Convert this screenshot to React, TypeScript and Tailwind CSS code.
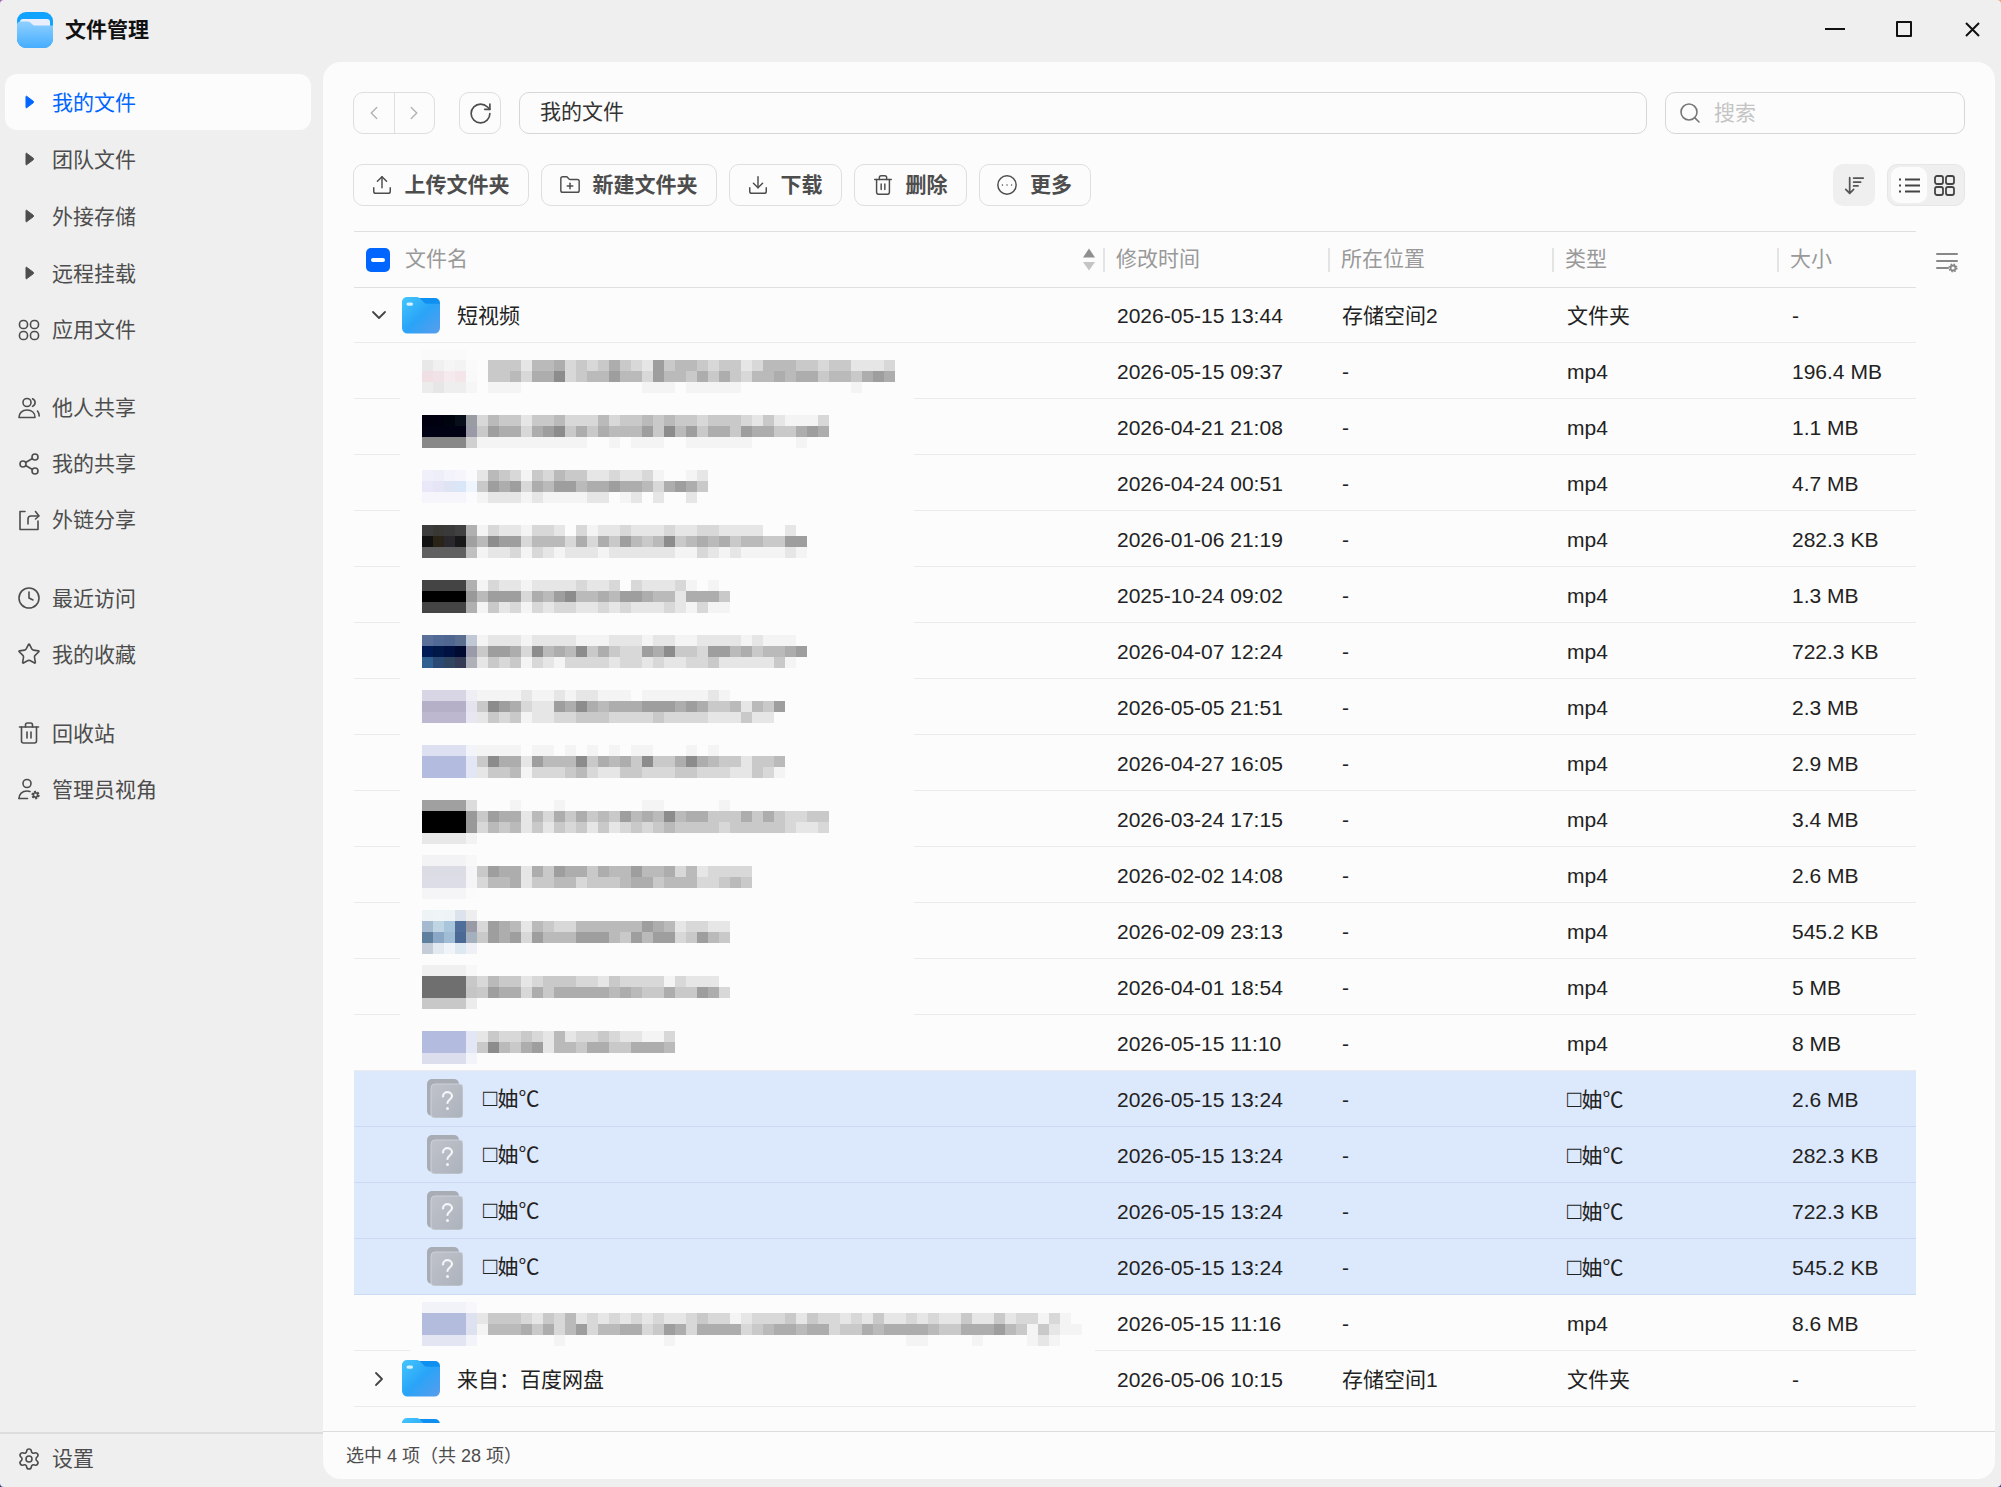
import { ChevronDown, ChevronLeft, ChevronRight, CircleEllipsis, Clock, Download, FolderPlus, RotateCw, Search, Settings, Share2, Star, Trash2, Upload } from "lucide-react";
import type { ReactNode } from "react";

const GRAY: Record<string, string> = {
  "8": "#8c8c8c", "9": "#9e9e9e", a: "#adadad", b: "#bababa", c: "#c9c9c9", d: "#d8d8d8", e: "#e6e6e6", f: "#f4f4f4",
};

// one mosaic line: thumb tiles (5 columns) + gray tiles, 11px grid
type Line = [string[], string];
const t = (c: string, fade: string) => [c, c, c, c, fade];
const E: Line = [[], ""];

const mosaic: Line[] = [
  [t("#fafafa", "#fcfcfc"), ""],
  [["#e8e8e8", "#f0f0f0", "#f5f5f5", "#f3f3f3", "#fafafa"], ".ccceb badcdcacde9cbbcdccedbbbccdcceeed".replace(" ", "")],
  [["#f0e0e4", "#f0e2e6", "#f5eaed", "#f3e5e8", "#f9f9f9"], ".ccbdaa8dcbb9bbd9bbcacacdbbabaacbbca9a"],
  [["#ececec", "#e6e6e6", "#eeeeee", "#eeeeee", "#f6f6f6"], ".fff...........fff.fffff..........f."],
  E, E,
  [["#000010", "#000010", "#00040f", "#060f1a", "#9a9ca4"], "dbcceccbdddbdccbcbccdcccdecefffd"],
  [t("#010213", "#999aa5"), "c9aada98cacabbb9c8b9caac9aacca9a"],
  [t("#888888", "#d0d0d0"), "ffffffffff..f.fff..ffffff....f."],
  E, E,
  [["#f0f0fb", "#eeeef9", "#f3f3fb", "#f5f5fb", "#fbfbfd"], "ebcdfcdbcceedeedf..fe"],
  [["#e8e8f8", "#e5e5f5", "#dfe4f5", "#d8e6f8", "#eef5fc"], "c9a9dab99baa9aabda9ac"],
  [t("#f5f5fb", "#fbfbfd"), "feeefeffffee.fe.e..e."],
  E, E,
  [["#3c3c3c", "#3a3835", "#3a3a3a", "#404040", "#b0b0b0"], "fdeefdde.dfeedeeedeeddeeee..e."],
  [["#111111", "#2a2318", "#2a282c", "#181818", "#a0a0a0"], "b899dbbbdadac9bcb8cbabacbbcc99"],
  [t("#606060", "#c0c0c0"), "feedfdefeeefeeeeeeffdefeffffef"],
  E, E,
  [t("#444444", "#b0b0b0"), "fdeefeeeedeed.deeedf.f."],
  [t("#000000", "#999999"), "b999dab98bbab99abbeaaac"],
  [t("#444444", "#b0b0b0"), "fcedfdeddeededeeedefdff"],
  E, E,
  [["#5a7099", "#506a95", "#4f6690", "#5a6e90", "#c0c8d5"], "feeefeeeefffeeefeeffeeeefefff"],
  [["#001a55", "#001848", "#001040", "#000a30", "#9a9aaa"], "c99ad8bab8cacdd9a8ccd99bacbba9"],
  [["#306090", "#2a4a75", "#2f4560", "#353a55", "#b0b0b8"], "ecdcfdefddddeddedeeddceeeeecf"],
  E, E,
  [t("#d8d5e5", "#f0eef5"), "ffffeffefeefff.ffffffef..."],
  [t("#b5b0c8", "#e5e3ee"), "c89adee9a8abaaa999a9accbebc9"],
  [t("#bdb8d0", "#e8e6f0"), "ecdcfeeddcccddddcddddeeecee."],
  E, E,
  [t("#dde0f0", "#f3f4fa"), "ffff.ff.f.f.f.ff...f.f......"],
  [t("#b3bcdf", "#e2e6f5"), "c8aae9bbb8cabac8cca8abcceccb"],
  [t("#b3bcdf", "#e2e6f5"), "eccbfdddcbdeeccdddccdddeecdf"],
  E, E,
  [t("#a0a0a0", "#dcdcdc"), "...f...f.......ff.....f"],
  [t("#000000", "#999999"), "c9aaebdacacbc9bab8baacccacacddcc"],
  [t("#000000", "#999999"), "dbcbececdcecedcdcbccccdcccccdeed"],
  [t("#e8e8e8", "#f3f3f3"), ""],
  E,
  [t("#f3f3f5", "#f8f8f8"), ""],
  [t("#dcdce5", "#f5f5f8"), "c9aaeac9aacabb9bbadbedddd"],
  [t("#dddde8", "#f5f5f8"), "dbbaeccbbdcccbaacbbbddcbc"],
  [t("#f5f5f8", "#fbfbfb"), ""],
  E,
  [["#eef4f6", "#eff5f7", "#eef4f5", "#dde3ec", "#eeeeee"], ""],
  [["#a5bace", "#c0d5e4", "#a8c5dc", "#4f6f9a", "#999aa5"], "d9abebcddbbbbbb9abeddee"],
  [["#5f7f9f", "#8aa8c5", "#a0bdd5", "#4a6a95", "#a5b0bf"], "c9a9d9bbb999bc9b99dc9bc"],
  [["#c5ced8", "#e2e9f0", "#f0f3f7", "#dde8f0", "#eff0f5"], ""],
  E,
  [t("#f0f0f0", "#f8f8f8"), ""],
  [t("#6f6f6f", "#c8c8c8"), "dbccedcccddecddddfdeee"],
  [t("#6f6f6f", "#c5c5c5"), "c9aadacaaaaababccacc9ad"],
  [t("#c8c8c8", "#ececec"), ""],
  E, E,
  [t("#b3bcdf", "#e2e6f5"), "ecddcdebeddcdeeffd"],
  [t("#b3bcdf", "#e2e6f5"), "c8bca9ebbcaaccaaab"],
  [t("#dcdeee", "#f3f3fa"), ""],
];

const mosaicLast: Line[] = [
  [t("#f1f3f9", "#f8f8fc"), ""],
  [t("#b3bcdc", "#dde1f0"), "ecccdecdbededededeedcddfe" + "dddcecddedeceededeeceeceddfdf"],
  [t("#b3bcdc", "#dde1f0"), "fbbbacadb9dbbaadc9adaaaa" + "dcbaabaadccabaaaabccaaa9bcfceff"],
  [t("#e3e6f2", "#f3f4f9"), ".......f.........f.....................ff....f....fef"],
];

const MosaicLines = ({ lines }: { lines: Line[] }) => (
  <>
    {lines.map(([thumb, grays], i) => (
      <div key={i} className="flex h-[11px]">
        <div className="flex w-[55px] shrink-0">
          {thumb.map((c, k) => <span key={k} className="h-[11px] w-[11px]" style={{ background: c }} />)}
        </div>
        {grays.split("").map((g, k) => <span key={k} className="h-[11px] w-[11px] shrink-0" style={{ background: GRAY[g] ?? "transparent" }} />)}
      </div>
    ))}
  </>
);

const Caret = ({ active }: { active?: boolean }) => (
  <svg width="24" height="16" viewBox="0 0 24 16" className={active ? "text-[#0066ff]" : "text-[#4d4d4d]"}>
    <path d="M9.500 2.200 L16.200 7.200 Q17 8 16.200 8.800 L9.500 13.800 Q9 14 9 13.400 V2.600 Q9 2 9.500 2.200Z" fill="currentColor" stroke="currentColor" strokeLinejoin="round" />
  </svg>
);

const Ico = ({ children }: { children: ReactNode }) => (
  <svg width="24" height="24" viewBox="0 0 24 24" fill="none" stroke="currentColor" strokeWidth="1.600" strokeLinecap="round" strokeLinejoin="round">{children}</svg>
);

const AppsIcon = () => (
  <Ico>
    <rect x="2.500" y="2.500" width="8" height="8" rx="3.600" /><rect x="13.500" y="2.500" width="8" height="8" rx="3.600" />
    <rect x="2.500" y="13.500" width="8" height="8" rx="3.600" /><rect x="13.500" y="13.500" width="8" height="8" rx="3.600" />
  </Ico>
);
const PeopleIcon = () => (
  <Ico>
    <circle cx="10" cy="6.500" r="4" />
    <path d="M2 21.500c0-4.500 3.200-7.500 8-7.500s8 3 8 7.500z" />
    <path d="M15.500 2.800c1.600.8 2.600 2 2.600 3.800s-1 3-2.600 3.800" />
    <path d="M20.500 15c1.200 1.400 1.700 3.200 1.700 5" />
  </Ico>
);
const LinkShareIcon = () => (
  <Ico>
    <path d="M8 3.500H3v18h18V13" />
    <path d="M11 16v-5a3 3 0 0 1 3-3h7.500" />
    <path d="M18.500 3.500l3.500 4.500-3.500 3" />
  </Ico>
);
const AdminIcon = () => (
  <Ico>
    <circle cx="10" cy="6.500" r="4" />
    <path d="M2 21.500c0-4.500 3.200-7.500 8-7.500 1 0 2 .1 3 .5" />
    <path d="M2 21.500h8.500" />
    <circle cx="18.500" cy="18" r="2.800" strokeWidth="2.800" strokeDasharray="1.700 1.200" strokeLinecap="butt" />
    <circle cx="18.500" cy="18" r="2.200" strokeWidth="1.500" />
  </Ico>
);
const BinIcon = () => (
  <Ico>
    <path d="M2.500 6h19" /><path d="M8.500 6V4a2 2 0 0 1 2-2h3a2 2 0 0 1 2 2v2" />
    <path d="M4.500 6v14a2 2 0 0 0 2 2h11a2 2 0 0 0 2-2V6" /><path d="M10 11v6" /><path d="M14 11v6" />
  </Ico>
);

const Folder = ({ id }: { id: string }) => (
  <svg width="38" height="37" viewBox="0 0 38 37" className="shrink-0">
    <defs>
      <linearGradient id={id} x1="0" y1="0" x2="1" y2="1">
        <stop offset="0" stopColor="#45c6fd" /><stop offset="0.5" stopColor="#29a4f8" /><stop offset="1" stopColor="#5a9cec" />
      </linearGradient>
    </defs>
    <rect x="0" y="1" width="38" height="20" rx="5" fill="#0f90f1" />
    <path d="M0 5a5 5 0 0 1 5-5h9c2 0 3 .6 4.500 2l3 3c1 1 2 1.800 3.500 1.800H38V31a5.500 5.500 0 0 1-5.500 5.500h-27A5.500 5.500 0 0 1 0 31z" fill={`url(#${id})`} />
    <rect x="4.500" y="5.500" width="6.500" height="3.200" rx="1.600" fill="#fff" opacity="0.8" />
  </svg>
);

const Logo = () => (
  <svg width="36" height="36" viewBox="0 0 36 36" className="shrink-0">
    <defs>
      <linearGradient id="lg-f" x1="0" y1="0" x2="0" y2="1">
        <stop offset="0" stopColor="#8fd0ff" /><stop offset="1" stopColor="#46adff" />
      </linearGradient>
    </defs>
    <rect width="36" height="36" rx="9" fill="#10a2ff" />
    <path d="M3 14V10a3 3 0 0 1 3-3h24a3 3 0 0 1 3 3v6z" fill="#e9eefc" />
    <path d="M0 13a3.500 3.500 0 0 1 3.500-3.500h7c2 0 3 1 4.500 2.500 1 1 2 1.500 3.500 1.500H36V27a9 9 0 0 1-9 9H9a9 9 0 0 1-9-9z" fill="url(#lg-f)" />
  </svg>
);

const Unknown = () => (
  <svg width="36" height="39" viewBox="0 0 36 39" className="shrink-0">
    <defs>
      <linearGradient id="uk" x1="0" y1="0" x2="1" y2="1">
        <stop offset="0" stopColor="#bfc2c9" /><stop offset="1" stopColor="#acb2bd" />
      </linearGradient>
    </defs>
    <rect x="0" y="0" width="32" height="37" rx="5" fill="#a8acb5" />
    <rect x="4" y="5" width="32" height="34" rx="4" fill="url(#uk)" stroke="#cdd0d7" strokeWidth="1" />
    <path d="M16 17.500c0-2.800 2.200-4.300 4.500-4.300s4.500 1.500 4.500 3.900c0 3.300-4.500 3.500-4.500 6.900" fill="none" stroke="#f4f5f8" strokeWidth="2.200" strokeLinecap="round" />
    <circle cx="20.500" cy="29.500" r="1.500" fill="#f4f5f8" />
  </svg>
);

type Item = { label: string; icon?: ReactNode; tree?: boolean; active?: boolean };
const nav: Item[][] = [
  [
    { label: "我的文件", tree: true, active: true },
    { label: "团队文件", tree: true },
    { label: "外接存储", tree: true },
    { label: "远程挂载", tree: true },
    { label: "应用文件", icon: <AppsIcon /> },
  ],
  [
    { label: "他人共享", icon: <PeopleIcon /> },
    { label: "我的共享", icon: <Share2 size={24} strokeWidth={1.6} /> },
    { label: "外链分享", icon: <LinkShareIcon /> },
  ],
  [
    { label: "最近访问", icon: <Clock size={24} strokeWidth={1.6} /> },
    { label: "我的收藏", icon: <Star size={24} strokeWidth={1.6} /> },
  ],
  [
    { label: "回收站", icon: <BinIcon /> },
    { label: "管理员视角", icon: <AdminIcon /> },
  ],
];

const actions = [
  { label: "上传文件夹", icon: <Upload size={22} strokeWidth={1.6} />, w: "w-[176px]" },
  { label: "新建文件夹", icon: <FolderPlus size={22} strokeWidth={1.6} />, w: "w-[176px]" },
  { label: "下载", icon: <Download size={22} strokeWidth={1.6} />, w: "w-[113px]" },
  { label: "删除", icon: <Trash2 size={22} strokeWidth={1.6} />, w: "w-[113px]" },
  { label: "更多", icon: <CircleEllipsis size={22} strokeWidth={1.6} />, w: "w-[112px]" },
];

const files = [
  ["2026-05-15 09:37", "196.4 MB"], ["2026-04-21 21:08", "1.1 MB"], ["2026-04-24 00:51", "4.7 MB"],
  ["2026-01-06 21:19", "282.3 KB"], ["2025-10-24 09:02", "1.3 MB"], ["2026-04-07 12:24", "722.3 KB"],
  ["2026-05-05 21:51", "2.3 MB"], ["2026-04-27 16:05", "2.9 MB"], ["2026-03-24 17:15", "3.4 MB"],
  ["2026-02-02 14:08", "2.6 MB"], ["2026-02-09 23:13", "545.2 KB"], ["2026-04-01 18:54", "5 MB"],
  ["2026-05-15 11:10", "8 MB"],
];
const broken = ["2.6 MB", "282.3 KB", "722.3 KB", "545.2 KB"];
const COLS = "grid grid-cols-[749px_225px_224px_225px_1fr] items-center";

// pl: date and location sit 14px in, type and size 15px
const Cell = ({ children, far }: { children: ReactNode; far?: boolean }) => (
  <div className={`pt-[2px] ${far ? "pl-[15px]" : "pl-[14px]"}`}>{children}</div>
);

const Mojibake = () => (
  <span><span className="text-[24px] leading-none">□</span>妯℃</span>
);

const HeadCell = ({ label }: { label: string }) => (
  <div className="flex items-center">
    <span className="h-6 w-[2px] bg-[#e4e4e4]" />
    <span className="mb-[2px] ml-[11px]">{label}</span>
  </div>
);

export default function App() {
  return (
    <div className="h-screen w-screen bg-[linear-gradient(180deg,transparent_50%,#303a90_50%),linear-gradient(90deg,#a55ab5,#e8a070)]">
      <div className="flex h-full w-full flex-col overflow-hidden rounded-[4px] bg-[#efefef] font-['Liberation_Sans','Noto_Sans_CJK_SC',sans-serif] text-[21px] text-[#222222]">
        <header className="flex h-[62px] shrink-0 items-center pb-[2px] pl-[17px]">
          <Logo />
          <span className="ml-3 font-bold text-[#111111]">文件管理</span>
          <div className="ml-auto flex items-center pb-[2px] text-[#111111]">
            <span className="mr-[51px] h-[2px] w-5 bg-[#111111]" />
            <span className="mr-[53px] h-4 w-4 rounded-[1px] border-2 border-[#111111]" />
            <svg width="15" height="15" viewBox="0 0 15 15" className="mr-[21px]"><path d="M1 1l13 13M14 1L1 14" stroke="currentColor" strokeWidth="2" /></svg>
          </div>
        </header>

        <div className="flex min-h-0 flex-1">
          <aside className="flex w-[323px] shrink-0 flex-col">
            <nav className="flex-1 pl-[5px] pr-[12px] pt-[12px] text-[#4d4d4d]">
              {nav.map((group, gi) => (
                <div key={gi} className={gi === 0 ? "" : gi === 3 ? "mt-[23px]" : "mt-[22px]"}>
                  {group.map((item, ii) => (
                    <div
                      key={item.label}
                      className={`flex h-[56px] items-center gap-[11px] rounded-[12px] pl-[12px] ${item.tree ? "mb-px" : ""} ${item.active ? "bg-[#fcfcfc] text-[#0066ff]" : ""}`}
                    >
                      {item.tree ? <Caret active={item.active} /> : item.icon}
                      <span className={gi === 0 && ii === 4 ? "" : gi === 1 ? "" : "pt-[2px]"}>{item.label}</span>
                    </div>
                  ))}
                </div>
              ))}
            </nav>
            <div className="flex h-[55px] shrink-0 items-center gap-[11px] border-t-2 border-[#dcdcdc] pb-[4px] pl-[17px] text-[#4d4d4d]">
              <Settings size={24} strokeWidth={1.6} />
              <span>设置</span>
            </div>
          </aside>

          <div className="min-w-0 flex-1 pb-[8px] pr-[6px]">
            <main className="flex h-full flex-col overflow-hidden rounded-[18px] bg-[#fcfcfc]">
              <div className="mt-[30px] flex h-[42px] shrink-0 items-center gap-[14px] pl-[30px] pr-[30px]">
                <div className="flex h-[42px] w-[82px] items-stretch rounded-[10px] border border-[#dedede] text-[#b4b4b4]">
                  <div className="flex flex-1 items-center justify-center border-r border-[#dedede]"><ChevronLeft size={22} strokeWidth={1.6} /></div>
                  <div className="flex flex-1 items-center justify-center"><ChevronRight size={22} strokeWidth={1.6} /></div>
                </div>
                <div className="ml-[10px] flex h-[42px] w-[42px] items-center justify-center rounded-[10px] border border-[#dedede] text-[#4d4d4d]">
                  <RotateCw size={25} strokeWidth={1.6} />
                </div>
                <div className="ml-[4px] flex h-[42px] flex-1 items-center rounded-[10px] border border-[#d6d6d6] pb-[2px] pl-[20px] text-[#333333]">我的文件</div>
                <div className="ml-[4px] flex h-[42px] w-[300px] items-center gap-[12px] rounded-[10px] border border-[#d6d6d6] pl-[12px] text-[#c4c4c4]">
                  <Search size={24} strokeWidth={1.6} className="text-[#777777]" />
                  <span>搜索</span>
                </div>
              </div>

              <div className="mt-[30px] flex h-[42px] shrink-0 items-center pl-[30px] pr-[30px]">
                <div className="flex gap-3">
                  {actions.map((a) => (
                    <div key={a.label} className={`flex h-[42px] items-center justify-center gap-3 rounded-[10px] border border-[#dedede] pr-[2px] font-bold text-[#4d4d4d] ${a.w}`}>
                      {a.icon}
                      <span>{a.label}</span>
                    </div>
                  ))}
                </div>
                <div className="ml-auto flex h-[42px] w-[42px] items-center justify-center rounded-[10px] bg-[#efefef] text-[#555555]">
                  <svg width="21" height="21" viewBox="0 0 24 24" fill="none" stroke="currentColor" strokeWidth="2" strokeLinecap="round" strokeLinejoin="round">
                    <path d="M6.500 3v18M2 16.500l4.500 4.500 4.500-4.500" /><path d="M11 3.500h11M11 8h8M11 12.500h5" />
                  </svg>
                </div>
                <div className="ml-3 flex h-[42px] w-[78px] items-center gap-[7px] rounded-[10px] border border-[#e6e6e6] bg-[#efefef] pl-[3px] text-[#444444]">
                  <div className="flex h-9 w-9 items-center justify-center rounded-[9px] bg-[#fcfcfc]">
                    <svg width="21" height="21" viewBox="0 0 21 21" fill="none" stroke="currentColor" strokeWidth="1.800">
                      <path d="M6 4.500h15M6 10.500h15M6 16.500h15" /><path d="M0 4.500h2M0 10.500h2M0 16.500h2" />
                    </svg>
                  </div>
                  <svg width="21" height="21" viewBox="0 0 21 21" fill="none" stroke="currentColor" strokeWidth="1.800">
                    <rect x="1" y="1" width="8" height="8" rx="2" /><rect x="12" y="1" width="8" height="8" rx="2" />
                    <rect x="1" y="12" width="8" height="8" rx="2" /><rect x="12" y="12" width="8" height="8" rx="2" />
                  </svg>
                </div>
              </div>

              <div className="mt-[25px] flex min-h-0 flex-1 pl-[31px]">
                <div className="relative w-[1562px] shrink-0 overflow-hidden">
                  <div className={`${COLS} h-[57px] border-y border-[#e0e0e0] text-[#999999]`}>
                    <div className="flex items-center pl-[12px] pr-[8px]">
                      <span className="flex h-6 w-6 items-center justify-center rounded-[5px] bg-[#0066ff]">
                        <span className="h-[4px] w-[14px] rounded-full bg-white" />
                      </span>
                      <span className="mb-[2px] ml-[15px]">文件名</span>
                      <svg width="12" height="23" viewBox="0 0 12 23" className="ml-auto">
                        <path d="M6 0.500L12 9.500H0z" fill="#8f8f8f" /><path d="M6 22.500L12 14H0z" fill="#c4c4c4" />
                      </svg>
                    </div>
                    <HeadCell label="修改时间" />
                    <HeadCell label="所在位置" />
                    <HeadCell label="类型" />
                    <HeadCell label="大小" />
                  </div>

                  <div className={`${COLS} h-[55px] border-b border-[#ebebeb]`}>
                    <div className="flex items-center pl-[13px]">
                      <ChevronDown size={24} strokeWidth={1.8} className="text-[#444444]" />
                      <span className="ml-[11px]"><Folder id="fd-a" /></span>
                      <span className="ml-[17px] pt-[2px]">短视频</span>
                    </div>
                    <Cell>2026-05-15 13:44</Cell>
                    <Cell>存储空间2</Cell>
                    <Cell far>文件夹</Cell>
                    <Cell far>-</Cell>
                  </div>

                  {files.map(([date, size]) => (
                    <div key={date} className={`${COLS} h-[56px] border-b border-[#ebebeb]`}>
                      <div />
                      <Cell>{date}</Cell>
                      <Cell>-</Cell>
                      <Cell far>mp4</Cell>
                      <Cell far>{size}</Cell>
                    </div>
                  ))}

                  {broken.map((size, i) => (
                    <div key={i} className={`${COLS} h-[56px] border-b border-[#c9daf2] bg-[#dce8fb]`}>
                      <div className="flex items-center gap-[20px] pl-[73px]">
                        <Unknown />
                        <Mojibake />
                      </div>
                      <Cell>2026-05-15 13:24</Cell>
                      <Cell>-</Cell>
                      <Cell far><Mojibake /></Cell>
                      <Cell far>{size}</Cell>
                    </div>
                  ))}

                  <div className={`${COLS} h-[56px] border-b border-[#ebebeb]`}>
                    <div />
                    <Cell>2026-05-15 11:16</Cell>
                    <Cell>-</Cell>
                    <Cell far>mp4</Cell>
                    <Cell far>8.6 MB</Cell>
                  </div>

                  <div className={`${COLS} h-[56px] border-b border-[#ebebeb]`}>
                    <div className="flex items-center pl-[13px]">
                      <ChevronRight size={24} strokeWidth={1.8} className="text-[#444444]" />
                      <span className="ml-[11px]"><Folder id="fd-b" /></span>
                      <span className="ml-[17px] pt-[2px]">来自：百度网盘</span>
                    </div>
                    <Cell>2026-05-06 10:15</Cell>
                    <Cell>存储空间1</Cell>
                    <Cell far>文件夹</Cell>
                    <Cell far>-</Cell>
                  </div>

                  <div className="flex h-[56px] items-start pl-[48px] pt-[11px]">
                    <Folder id="fd-c" />
                  </div>

                  {/* redacted names, laid over the rows */}
                  <div className="absolute left-[46px] top-[113px] h-[726px] w-[514px] overflow-hidden bg-[#fcfcfc] pl-[22px] pt-[5px]">
                    <MosaicLines lines={mosaic} />
                  </div>
                  <div className="absolute left-[56px] top-[1065px] h-[56px] w-[685px] overflow-hidden bg-[#fcfcfc] pl-[12px] pt-[6px]">
                    <MosaicLines lines={mosaicLast} />
                  </div>
                </div>

                <div className="pl-[20px] pt-[21px] text-[#888888]">
                  <svg width="22" height="21" viewBox="0 0 22 21" fill="none" stroke="currentColor" strokeWidth="2" strokeLinecap="round">
                    <path d="M1 2h20M1 9h20M1 16h11" />
                    <circle cx="17" cy="16" r="2.500" strokeWidth="1.800" />
                    <circle cx="17" cy="16" r="3.800" strokeWidth="1.500" strokeDasharray="1.500 1.500" strokeLinecap="butt" />
                  </svg>
                </div>
              </div>

              <footer className="mt-[8px] flex h-[48px] shrink-0 items-center border-t border-[#dcdcdc] pl-[23px] pt-[2px] text-[18px] text-[#4d4d4d]">
                选中 4 项（共 28 项）
              </footer>
            </main>
          </div>
        </div>
      </div>
    </div>
  );
}
